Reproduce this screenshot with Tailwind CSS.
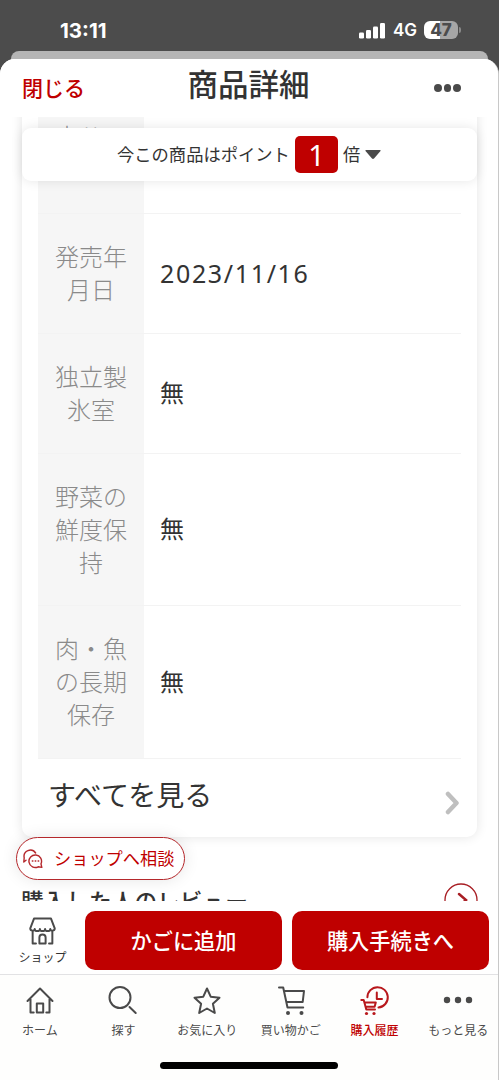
<!DOCTYPE html>
<html lang="ja">
<head>
<meta charset="utf-8">
<title>商品詳細</title>
<script src="https://cdn.jsdelivr.net/npm/@tailwindcss/browser@4"></script>
</head>
<body class="w-[499px] h-[1080px] overflow-hidden bg-[#4c4c4c] font-['Noto_Sans_CJK_JP',sans-serif] text-[#333]">
<div class="flex flex-col w-[499px] h-[1080px] overflow-hidden">

  <!-- status bar -->
  <div class="h-[51px] shrink-0 flex items-start justify-between pl-[60px] pr-[40px] text-white font-['Inter',sans-serif]">
    <div class="mt-[17px] text-[20.500px] leading-[27px] font-bold">13:11</div>
    <div class="mt-[20px] flex items-center">
      <svg class="w-[27px] h-[18px]" viewBox="0 0 27 18" fill="#fff"><rect x="0" y="11.500" width="5" height="6" rx="1.300"/><rect x="7" y="9" width="5" height="8.500" rx="1.300"/><rect x="14" y="5.500" width="5" height="12" rx="1.300"/><rect x="21" y="2" width="5" height="15.500" rx="1.300"/></svg>
      <span class="ml-[7px] text-[17px] leading-[20px] font-semibold w-[25px]">4G</span>
      <div class="ml-[6px] w-[34px] h-[18px] rounded-[6px] bg-[linear-gradient(90deg,#fff_47%,#a6a6a6_47%)] text-[#4c4c4c] text-[17px] leading-[18px] font-extrabold text-center">47</div>
      <div class="ml-px -mr-[2px] w-[2px] h-[6px] rounded-r-full bg-[#8a8a8a]"></div>
    </div>
  </div>
  <div class="h-[8px] shrink-0 mx-[11px] rounded-t-[9px] bg-[#b5b5b5]"></div>

  <!-- sheet -->
  <div class="bg-[linear-gradient(90deg,#4c4c4c_11px,#b5b5b5_11px,#b5b5b5_488px,#4c4c4c_488px)] flex-1 min-h-0">
  <div class="h-full flex flex-col bg-white rounded-t-[15px] border-r border-[#c8c8c8] overflow-hidden">
    <div class="h-[58px] shrink-0 grid grid-cols-3 pl-[22px] pr-[37px] bg-white">
      <div class="mt-[12px] text-[21px] leading-[32px] font-medium text-[#bf0000]">閉じる</div>
      <div class="mt-[4px] text-[30.500px] leading-[40px] font-medium whitespace-nowrap flex justify-center pl-[14px]">商品詳細</div>
      <div class="flex justify-end gap-[2px] mt-[25px]">
        <i class="size-[7.500px] rounded-full bg-[#4a4a4a]"></i><i class="size-[7.500px] rounded-full bg-[#4a4a4a]"></i><i class="size-[7.500px] rounded-full bg-[#4a4a4a]"></i>
      </div>
    </div>

    <!-- scrolled content -->
    <div class="h-[784px] shrink-0 relative overflow-hidden">
      <div class="mx-[22px] -mt-[20px] w-[455px] h-[740px] rounded-[10px] bg-white shadow-[0_0_12px_rgba(0,0,0,0.11)] px-4 flex flex-col">
        <div class="h-[117px] flex border-b border-[#f3f3f3]">
          <div class="w-[106px] bg-[#f6f6f6] pt-[22px] text-center text-[24px] leading-[33px] font-light text-[#8a8a8a]">本サイ<br>ズ</div>
        </div>
        <div class="h-[120px] flex items-center border-b border-[#f3f3f3]">
          <div class="w-[106px] h-full bg-[#f6f6f6] flex items-center justify-center pb-[3px] text-center text-[24px] leading-[33px] font-light text-[#8a8a8a]">発売年<br>月日</div>
          <div class="pl-[16px] text-[25px] font-['Noto_Sans','Noto_Sans_CJK_JP',sans-serif] tracking-[1.650px]">2023/11/16</div>
        </div>
        <div class="h-[120px] flex items-center border-b border-[#f3f3f3]">
          <div class="w-[106px] h-full bg-[#f6f6f6] flex items-center justify-center pb-[3px] text-center text-[24px] leading-[33px] font-light text-[#8a8a8a]">独立製<br>氷室</div>
          <div class="pl-[16px] pb-[3px] text-[24px]">無</div>
        </div>
        <div class="h-[152px] flex items-center border-b border-[#f3f3f3]">
          <div class="w-[106px] h-full bg-[#f6f6f6] flex items-center justify-center pb-[3px] text-center text-[24px] leading-[33px] font-light text-[#8a8a8a]">野菜の<br>鮮度保<br>持</div>
          <div class="pl-[16px] pb-[3px] text-[24px]">無</div>
        </div>
        <div class="h-[153px] flex items-center border-b border-[#f3f3f3]">
          <div class="w-[106px] h-full bg-[#f6f6f6] flex items-center justify-center pb-[3px] text-center text-[24px] leading-[33px] font-light text-[#8a8a8a]">肉・魚<br>の長期<br>保存</div>
          <div class="pl-[16px] pb-[3px] text-[24px]">無</div>
        </div>
        <div class="flex-1 flex justify-between pl-[10px]">
          <div class="mt-[15px] text-[28px] leading-[40px]">すべてを見る</div>
          <svg class="mt-[32px] w-[16px] h-[24px]" viewBox="0 0 16 24" fill="none" stroke="#bfbfbf" stroke-width="4.500" stroke-linecap="round" stroke-linejoin="round"><path d="M3 3l8.500 9L3 21"/></svg>
        </div>
      </div>
      <div class="mt-[46px] flex justify-between pl-[21px] pr-[20px]">
        <div class="text-[22.700px] leading-[36px] font-medium">購入した人のレビュー</div>
        <svg class="w-[34px] h-[34px]" viewBox="0 0 34 34" fill="none" stroke="#a81e24"><circle cx="17" cy="17" r="16" stroke-width="1.300"/><path d="M15 11l7 6-7 6" stroke-width="2.500" stroke-linecap="round"/></svg>
      </div>

      <!-- point banner -->
      <div class="absolute left-[22px] top-[11px] w-[455px] h-[53px] rounded-[9px] bg-white shadow-[0_0_12px_rgba(0,0,0,0.10)] flex items-center pl-[95px] text-[17.300px]">
        <span class="whitespace-nowrap w-[178px] pb-[2px]">今この商品はポイント</span>
        <span class="w-[43px] h-[37px] rounded-[5px] bg-[#bf0000] text-white text-[29px] leading-[37px] text-center font-['Noto_Sans',sans-serif] font-normal">1</span>
        <span class="ml-[5px] pb-[2px]">倍</span>
        <svg class="ml-[5px] w-[16px] h-[9px]" viewBox="0 0 16 9"><path d="M1 0h14q1 0 .5 1L9 8.500q-1 .8-2 0L.5 1Q0 0 1 0z" fill="#4a4a4a"/></svg>
      </div>

      <!-- shop chat pill -->
      <div class="absolute left-[16px] top-[720px] w-[169px] h-[43px] rounded-full border border-[#b5282c] bg-white shadow-[0_0_16px_rgba(0,0,0,0.1)] flex items-center pl-[6px] text-[#bf0000] text-[17.200px]">
        <svg class="w-[20px] h-[20px]" viewBox="0 0 20 20" fill="none" stroke="#b5282c" stroke-width="1.400" stroke-linecap="round" stroke-linejoin="round"><path d="M3 11.300L.8 13l.4-4.200M1.200 8.800A6.300 6.300 0 0 1 12.600 4"/><path d="M18 14.800l.8 3.600-3.600-.6a6.300 6.300 0 1 1 2.800-3z"/><path d="M9.300 12h.6M12.200 12h.6M15.100 12h.6"/></svg>
        <span class="ml-[11px] pb-[2px] whitespace-nowrap">ショップへ相談</span>
      </div>
    </div>

    <!-- purchase actions -->
    <div class="h-[74px] shrink-0 bg-white flex pt-[10px] border-b border-[#e2e2e4]">
      <div class="w-[85px] flex flex-col items-center pt-[6px]">
        <svg class="w-[27px] h-[28px]" viewBox="0 0 26 27" fill="none" stroke="#4a4a4a" stroke-width="1.900" stroke-linejoin="round" stroke-linecap="round"><path d="M4.800 1.500h16.400l3.600 9.500c0 2.500-4.300 3-4.300.5 0 2.800-5 2.800-5 0 0 2.800-5 2.800-5 0 0 2.800-5 2.800-5 0 0 2.500-4.300 2-4.300-.5z"/><path d="M3.500 14v11.500h3.200M22.500 14v11.500h-3.200M10 25.500v-5.700a3 3 0 0 1 6 0v5.700z"/></svg>
        <div class="mt-[3px] text-[12px] leading-[18px]">ショップ</div>
      </div>
      <div class="w-[197px] h-[59px] rounded-[10px] bg-[#bf0000] text-white text-[21.200px] leading-[58px] font-medium text-center">かごに追加</div>
      <div class="ml-[10px] w-[197px] h-[59px] rounded-[10px] bg-[#bf0000] text-white text-[21.200px] leading-[58px] font-medium text-center">購入手続きへ</div>
    </div>

    <!-- tab bar -->
    <div class="h-[105px] shrink-0 bg-[#fefefd] flex flex-col justify-between">
      <div class="-ml-[2px] w-[502px] grid grid-cols-6 text-[12px] leading-[18px] text-[#4a4a4a] text-center">
        <div class="flex flex-col items-center pt-[10px]">
          <svg class="w-[32px] h-[32px]" viewBox="0 0 32 32" fill="none" stroke="#4a4a4a" stroke-width="2" stroke-linejoin="round" stroke-linecap="round"><path d="M3.500 16L16 3.500 28.500 16M6.500 14v13.500h3.200M25.500 14v13.500h-3.200M12.800 27.500v-9h6.400v9z"/></svg>
          <span class="mt-[4px]">ホーム</span>
        </div>
        <div class="flex flex-col items-center pt-[10px]">
          <svg class="w-[32px] h-[32px]" viewBox="0 0 32 32" fill="none" stroke="#4a4a4a" stroke-width="2" stroke-linecap="round"><circle cx="13" cy="12.500" r="10.500"/><path d="M22.500 22l6.200 6"/></svg>
          <span class="mt-[4px]">探す</span>
        </div>
        <div class="flex flex-col items-center pt-[10px]">
          <svg class="w-[32px] h-[32px]" viewBox="0 0 32 32" fill="none" stroke="#4a4a4a" stroke-width="2" stroke-linejoin="round"><path d="M16 3.500l3.700 8.200 8.800 1-6.600 6 1.900 9.300-7.800-4.500L8.200 28l1.900-9.300-6.600-6 8.800-1z"/></svg>
          <span class="mt-[4px] whitespace-nowrap">お気に入り</span>
        </div>
        <div class="flex flex-col items-center pt-[10px]">
          <svg class="w-[32px] h-[32px]" viewBox="0 0 32 32" fill="none" stroke="#4a4a4a" stroke-width="2" stroke-linejoin="round" stroke-linecap="round"><path d="M4 2.500h4.200L12.500 22.500h15.700M9.300 6h19.700L27.700 17H11.500"/><circle cx="13" cy="28" r="2" fill="#4a4a4a" stroke="none"/><circle cx="26.500" cy="28" r="2" fill="#4a4a4a" stroke="none"/></svg>
          <span class="mt-[4px] whitespace-nowrap">買い物かご</span>
        </div>
        <div class="flex flex-col items-center pt-[10px] text-[#bf0000]">
          <svg class="w-[32px] h-[32px]" viewBox="0 0 32 32" fill="none" stroke="#b8181c" stroke-width="2" stroke-linejoin="round" stroke-linecap="round"><path d="M9.400 12.200A10.200 10.200 0 1 1 20.500 22.500M18.800 7.500V14H24"/><path d="M3.300 15h2.400l2.600 9.500h8.700M6.500 17.500h11.300l-1.200 4.200H7.800"/><circle cx="8.500" cy="28.500" r="1.600" fill="#b8181c" stroke="none"/><circle cx="16" cy="28.500" r="1.600" fill="#b8181c" stroke="none"/></svg>
          <span class="mt-[4px] font-medium">購入履歴</span>
        </div>
        <div class="flex flex-col items-center pt-[10px]">
          <svg class="w-[32px] h-[32px]" viewBox="0 0 32 32" fill="#4a4a4a"><circle cx="5" cy="15" r="3.200"/><circle cx="16" cy="15" r="3.200"/><circle cx="27" cy="15" r="3.200"/></svg>
          <span class="mt-[4px] whitespace-nowrap">もっと見る</span>
        </div>
      </div>
      <div class="mx-auto mb-[11px] w-[178px] h-[7px] rounded-full bg-black"></div>
    </div>
  </div>
  </div>
</div>
</body>
</html>
